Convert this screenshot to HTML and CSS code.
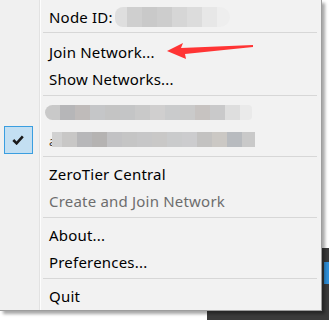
FILE: index.html
```html
<!DOCTYPE html>
<html>

<head>
    <title>ZeroTier Tray Menu</title>
    <link rel="stylesheet" href="styles.css">
</head>

<body>
    <div class="desk">
        <div class="taskbar"></div>
        <div class="tray-icon"></div>
        <div class="menu">
            <div class="item first">
                <div class="gut"></div>
                <div class="label">Node ID:<span class="blur blur-id"></span></div>
            </div>
            <div class="sep sep-first"></div>
            <div class="item">
                <div class="gut"></div>
                <div class="label">Join Network...</div>
                <svg class="arrow" width="100" height="24" viewBox="160 38 100 24">
                    <polygon points="167,52 183,44 181,49 253,46 253,48 185,55 186,60" fill="#ff3434" />
                </svg>
            </div>
            <div class="item">
                <div class="gut"></div>
                <div class="label">Show Networks...</div>
            </div>
            <div class="sep"></div>
            <div class="item">
                <div class="gut"></div>
                <div class="label"><span class="blur blur-net1"></span></div>
            </div>
            <div class="item">
                <div class="gut">
                    <div class="check">
                        <svg width="12" height="10" viewBox="0 0 12 10">
                            <path d="M1.3 5 L4.6 8.3 L10.8 1.4" fill="none" stroke="#1a1a1a" stroke-width="2.6" />
                        </svg>
                    </div>
                </div>
                <div class="label"><span class="glyph">a</span><span class="blur blur-net2"></span></div>
            </div>
            <div class="sep"></div>
            <div class="item">
                <div class="gut"></div>
                <div class="label">ZeroTier Central</div>
            </div>
            <div class="item disabled">
                <div class="gut"></div>
                <div class="label">Create and Join Network</div>
            </div>
            <div class="sep"></div>
            <div class="item">
                <div class="gut"></div>
                <div class="label">About...</div>
            </div>
            <div class="item">
                <div class="gut"></div>
                <div class="label">Preferences...</div>
            </div>
            <div class="sep"></div>
            <div class="item">
                <div class="gut"></div>
                <div class="label">Quit</div>
            </div>
        </div>
    </div>
</body>

</html>
```

FILE: styles.css
```css
body {
    margin: 0;
    font-family: "Noto Sans", "Open Sans", sans-serif;
    background-color: #ffffff;
}

.desk {
    position: relative;
    width: 329px;
    height: 320px;
    overflow: hidden;
}

.taskbar {
    position: absolute;
    left: 207px;
    top: 248px;
    right: 0;
    bottom: 0;
    background-color: #3b3b3b;
}

.tray-icon {
    position: absolute;
    left: 324px;
    top: 262px;
    width: 8px;
    height: 22px;
    background-color: #2f8fd8;
}

.menu {
    position: relative;
    width: 321px;
    padding-top: 3px;
    padding-bottom: 1px;
    background: linear-gradient(to right, #f0f0f0 0 39px, #e2e2e2 39px 40px, #fdfdfd 40px 41px, #f2f2f2 41px);
    border-right: 1px solid #9d9d9d;
    border-bottom: 1px solid #9d9d9d;
    box-shadow: 3px 3px 3px rgba(0, 0, 0, 0.35);
    color: #000;
    font-size: 15px;
    letter-spacing: 0.2px;
}

.item {
    position: relative;
    display: flex;
    height: 27px;
    align-items: center;
}

.gut {
    width: 40px;
    height: 27px;
    display: flex;
    align-items: center;
    justify-content: center;
}

.label {
    padding-left: 9px;
    display: flex;
    align-items: center;
    white-space: nowrap;
}

.disabled {
    color: #6d6d6d;
}

.sep {
    height: 1px;
    margin: 3px 4px 3px 43px;
    background-color: #d7d7d7;
}

.sep-first {
    margin-top: 2px;
    margin-bottom: 5px;
}

.check {
    width: 27px;
    height: 26px;
    margin-left: -4px;
    border: 1px solid #3a9ee0;
    background-color: #c3dff2;
    display: flex;
    align-items: center;
    justify-content: center;
}

.arrow {
    position: absolute;
    left: 160px;
    top: -1px;
}

.glyph {
    font-size: 12px;
    margin-top: 4px;
    color: #333;
}

.blur {
    display: inline-block;
}

.blur-id {
    width: 115px;
    height: 20px;
    margin-left: 2px;
    border-radius: 8px 10px 10px 8px;
    background: linear-gradient(to right, #dedede 0 12px, #cfcfcf 12px 27px, #c9c9c9 27px 42px, #cdcdcd 42px 57px, #d6d6d6 57px 72px, #dcdcdc 72px 87px, #e7e7e7 87px 102px, #eeeeee 102px);
}

.blur-net1 {
    width: 207px;
    height: 15px;
    margin-left: -4px;
    border-radius: 8px 4px 4px 8px;
    background: linear-gradient(to right, #c9c9c9 0 15px, #b6b6b8 15px 30px, #bfbbba 30px 45px, #c5c6c8 45px 60px, #c4c4c4 60px 75px, #c4c5c6 75px 90px, #c9c9c9 90px 105px, #d0cfcf 105px 120px, #cacbcc 120px 135px, #cacaca 135px 150px, #c7c3c1 150px 165px, #c9c9ca 165px 180px, #dedede 180px 195px, #eaeaea 195px);
}

.blur-net2 {
    width: 203px;
    height: 15px;
    margin-left: -4px;
    background: linear-gradient(to right, #d1d1d1 0 10px, #c8c7c6 10px 25px, #b7b7b9 25px 40px, #b5b3b2 40px 55px, #c2c2c4 55px 70px, #c5c5c5 70px 85px, #c7c7c8 85px 100px, #c9c8c7 100px 115px, #cacbcc 115px 130px, #ccccce 130px 145px, #c3c2c1 145px 160px, #cbc8c4 160px 175px, #b8bbbf 175px 190px, #c9c9c9 190px);
}
```
